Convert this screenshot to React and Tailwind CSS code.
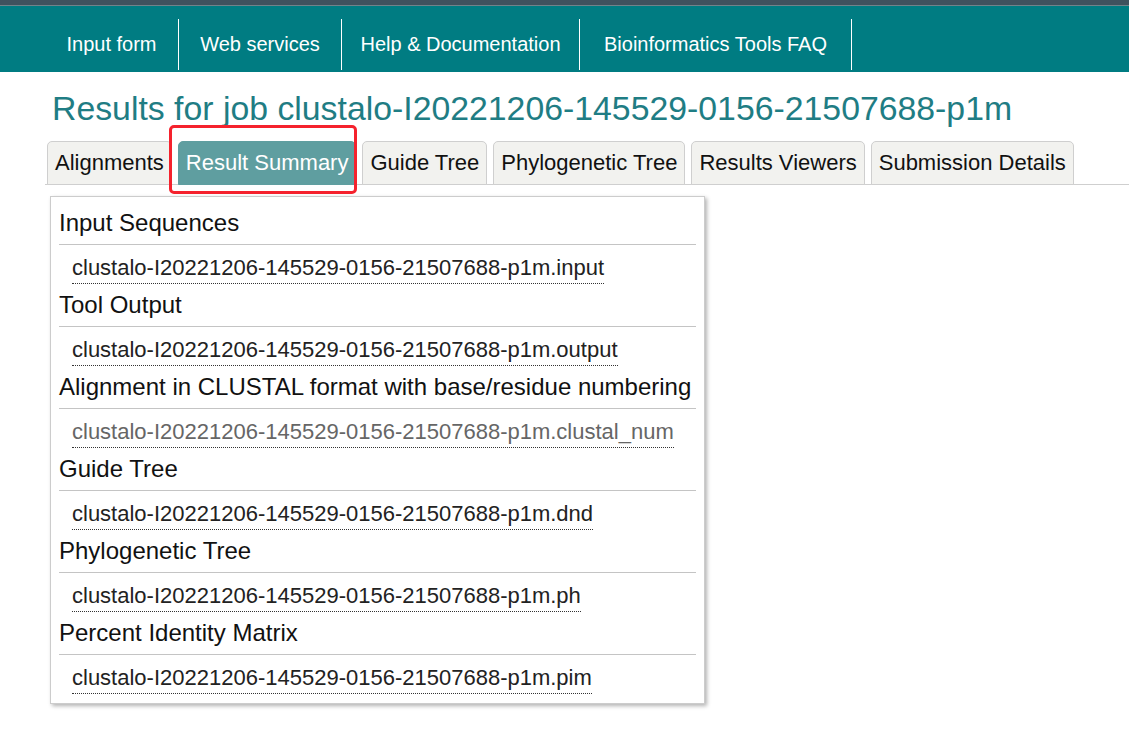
import React from 'react'

const navItems = [
  { label: 'Input form', w: 'w-[134px]' },
  { label: 'Web services', w: 'w-[163px]' },
  { label: 'Help & Documentation', w: 'w-[238px]' },
  { label: 'Bioinformatics Tools FAQ', w: 'w-[272px]' },
]

const tabs = ['Alignments', 'Result Summary', 'Guide Tree', 'Phylogenetic Tree', 'Results Viewers', 'Submission Details']

const job = 'clustalo-I20221206-145529-0156-21507688-p1m'

const sections = [
  { title: 'Input Sequences', file: `${job}.input` },
  { title: 'Tool Output', file: `${job}.output` },
  { title: 'Alignment in CLUSTAL format with base/residue numbering', file: `${job}.clustal_num`, visited: true },
  { title: 'Guide Tree', file: `${job}.dnd` },
  { title: 'Phylogenetic Tree', file: `${job}.ph` },
  { title: 'Percent Identity Matrix', file: `${job}.pim` },
]

export default function App() {
  return (
    <div className="relative min-h-[741px] bg-white font-['Liberation_Sans',Arial,sans-serif]">
      {/* top strip */}
      <div className="h-[5px] bg-[#3f525e]" />
      <div className="h-[1px] bg-[#71838a]" />

      {/* nav bar */}
      <nav className="h-[66px] bg-[#007c82] pt-[13px] pl-[45px] flex items-start">
        {navItems.map(item => (
          <a
            key={item.label}
            className={`${item.w} h-[51px] pb-[2px] flex items-center justify-center border-r border-white text-white text-[20px]`}
          >
            {item.label}
          </a>
        ))}
      </nav>

      <h1 className="mt-[16px] ml-[52px] text-[33.8px] leading-[40px] text-[#1f7d84]">
        Results for job {job}
      </h1>

      {/* tabs */}
      <div className="mt-[13px] ml-[45px] flex items-end border-b border-[#cfcfcf] pl-[2px]">
        {tabs.map(t => {
          const active = t === 'Result Summary'
          return (
            <div key={t} className="relative mr-[6px] -mb-[1px]">
              <div
                className={
                  active
                    ? 'h-[44px] px-[7px] pb-[2px] flex items-center rounded-t-[5px] border border-[#5f9ea0] bg-[#5f9ea0] text-white text-[22px]'
                    : 'h-[44px] px-[7px] pb-[2px] flex items-center rounded-t-[5px] border border-[#cfcfcf] bg-[#f2f2ef] text-[#111] text-[22px]'
                }
              >
                {t}
              </div>
              {active && (
                <div className="absolute left-[-9px] right-[-1px] top-[-16px] bottom-[-9px] border-[3px] border-[#f5222d] rounded-[5px]" />
              )}
            </div>
          )
        })}
      </div>

      {/* result summary panel */}
      <div className="mt-[11px] ml-[50px] w-[655px] border border-[#cccccc] shadow-[2px_2px_4px_rgba(0,0,0,0.3)] px-[8px] pt-[11px] pb-[3px]">
        {sections.map(s => (
          <div key={s.title}>
            <h3 className="text-[24px] leading-[28px] pt-[1px] pb-[7px] border-b border-[#c4c4c4] text-[#111]">
              {s.title}
            </h3>
            <div className="pl-[13px] mt-[10px] mb-[6px]">
              <a
                className={`inline-block text-[22px] leading-[26px] pb-[2px] border-b border-dotted border-[#333] ${s.visited ? 'text-[#666]' : 'text-[#222]'}`}
              >
                {s.file}
              </a>
            </div>
          </div>
        ))}
      </div>
    </div>
  )
}
